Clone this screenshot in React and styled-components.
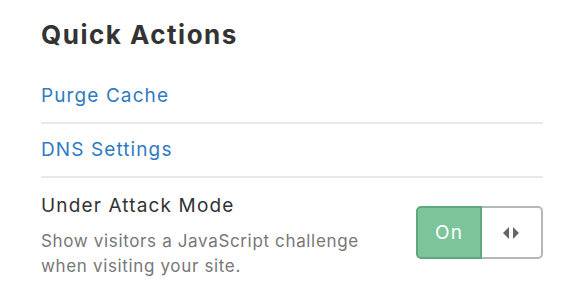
import React, { useState } from "react";
import styled, { createGlobalStyle } from "styled-components";

const GlobalStyle = createGlobalStyle`
  html, body {
    margin: 0;
    padding: 0;
    background: #fff;
  }
  body {
    font-family: Inter, "Liberation Sans", sans-serif;
    -webkit-font-smoothing: antialiased;
  }
`;

function Toggle({ on, onChange }) {
  return (
    <ToggleBox onClick={() => onChange(!on)}>
      <ToggleLabel $on={on}>{on ? "On" : "Off"}</ToggleLabel>
      <ToggleHandle>
        <svg width="20" height="12" viewBox="0 0 20 12">
          <path d="M7 0 L7 12 L1 6 Z" fill="#666" />
          <path d="M11 0 L11 12 L17 6 Z" fill="#666" />
        </svg>
      </ToggleHandle>
    </ToggleBox>
  );
}

export default function App() {
  const [attack, setAttack] = useState(true);

  return (
    <>
      <GlobalStyle />
      <Panel>
        <Title>Quick Actions</Title>
        <Row>
          <ActionLink href="#">Purge Cache</ActionLink>
        </Row>
        <Row>
          <ActionLink href="#">DNS Settings</ActionLink>
        </Row>
        <SettingRow>
          <SettingText>
            <SettingName>Under Attack Mode</SettingName>
            <SettingDesc>
              Show visitors a JavaScript challenge
              <br />
              when visiting your site.
            </SettingDesc>
          </SettingText>
          <Toggle on={attack} onChange={setAttack} />
        </SettingRow>
      </Panel>
    </>
  );
}

// 패널
const Panel = styled.div`
  width: 502px;
  padding: 19px 0 0 41px;
`;

const Title = styled.h2`
  margin: 0 0 19px;
  font-size: 26px;
  line-height: 32px;
  font-weight: 700;
  letter-spacing: 1.5px;
  color: #333;
`;

// 링크 행
const Row = styled.div`
  padding: 14px 0;
  line-height: 24px;
  border-bottom: 2px solid #e8e8e8;
`;

const ActionLink = styled.a`
  font-size: 19px;
  letter-spacing: 1.1px;
  color: #2f7bbf;
  text-decoration: none;
`;

// 설정 행
const SettingRow = styled.div`
  display: flex;
  align-items: center;
  justify-content: space-between;
  padding: 16px 0 0;
`;

const SettingText = styled.div`
  display: flex;
  flex-direction: column;
  gap: 11px;
`;

const SettingName = styled.div`
  font-size: 19px;
  line-height: 24px;
  letter-spacing: 1.15px;
  color: #333;
`;

const SettingDesc = styled.div`
  font-size: 17px;
  line-height: 25px;
  letter-spacing: 0.65px;
  color: #777;
`;

// 토글
const ToggleBox = styled.div`
  display: flex;
  width: 127px;
  height: 53px;
  margin-bottom: 8px;
  cursor: pointer;
`;

const ToggleLabel = styled.div`
  display: flex;
  align-items: center;
  justify-content: center;
  width: 66px;
  box-sizing: border-box;
  background: ${(p) => (p.$on ? "#7cc59b" : "#ddd")};
  border: 2px solid ${(p) => (p.$on ? "#5fa77c" : "#bbb")};
  border-radius: 5px 0 0 5px;
  color: #fff;
  font-size: 19px;
  letter-spacing: 1px;
`;

const ToggleHandle = styled.div`
  display: flex;
  align-items: center;
  justify-content: center;
  flex: 1;
  background: #fff;
  border: 2px solid #b3b8bb;
  border-left: none;
  border-radius: 0 5px 5px 0;
`;
